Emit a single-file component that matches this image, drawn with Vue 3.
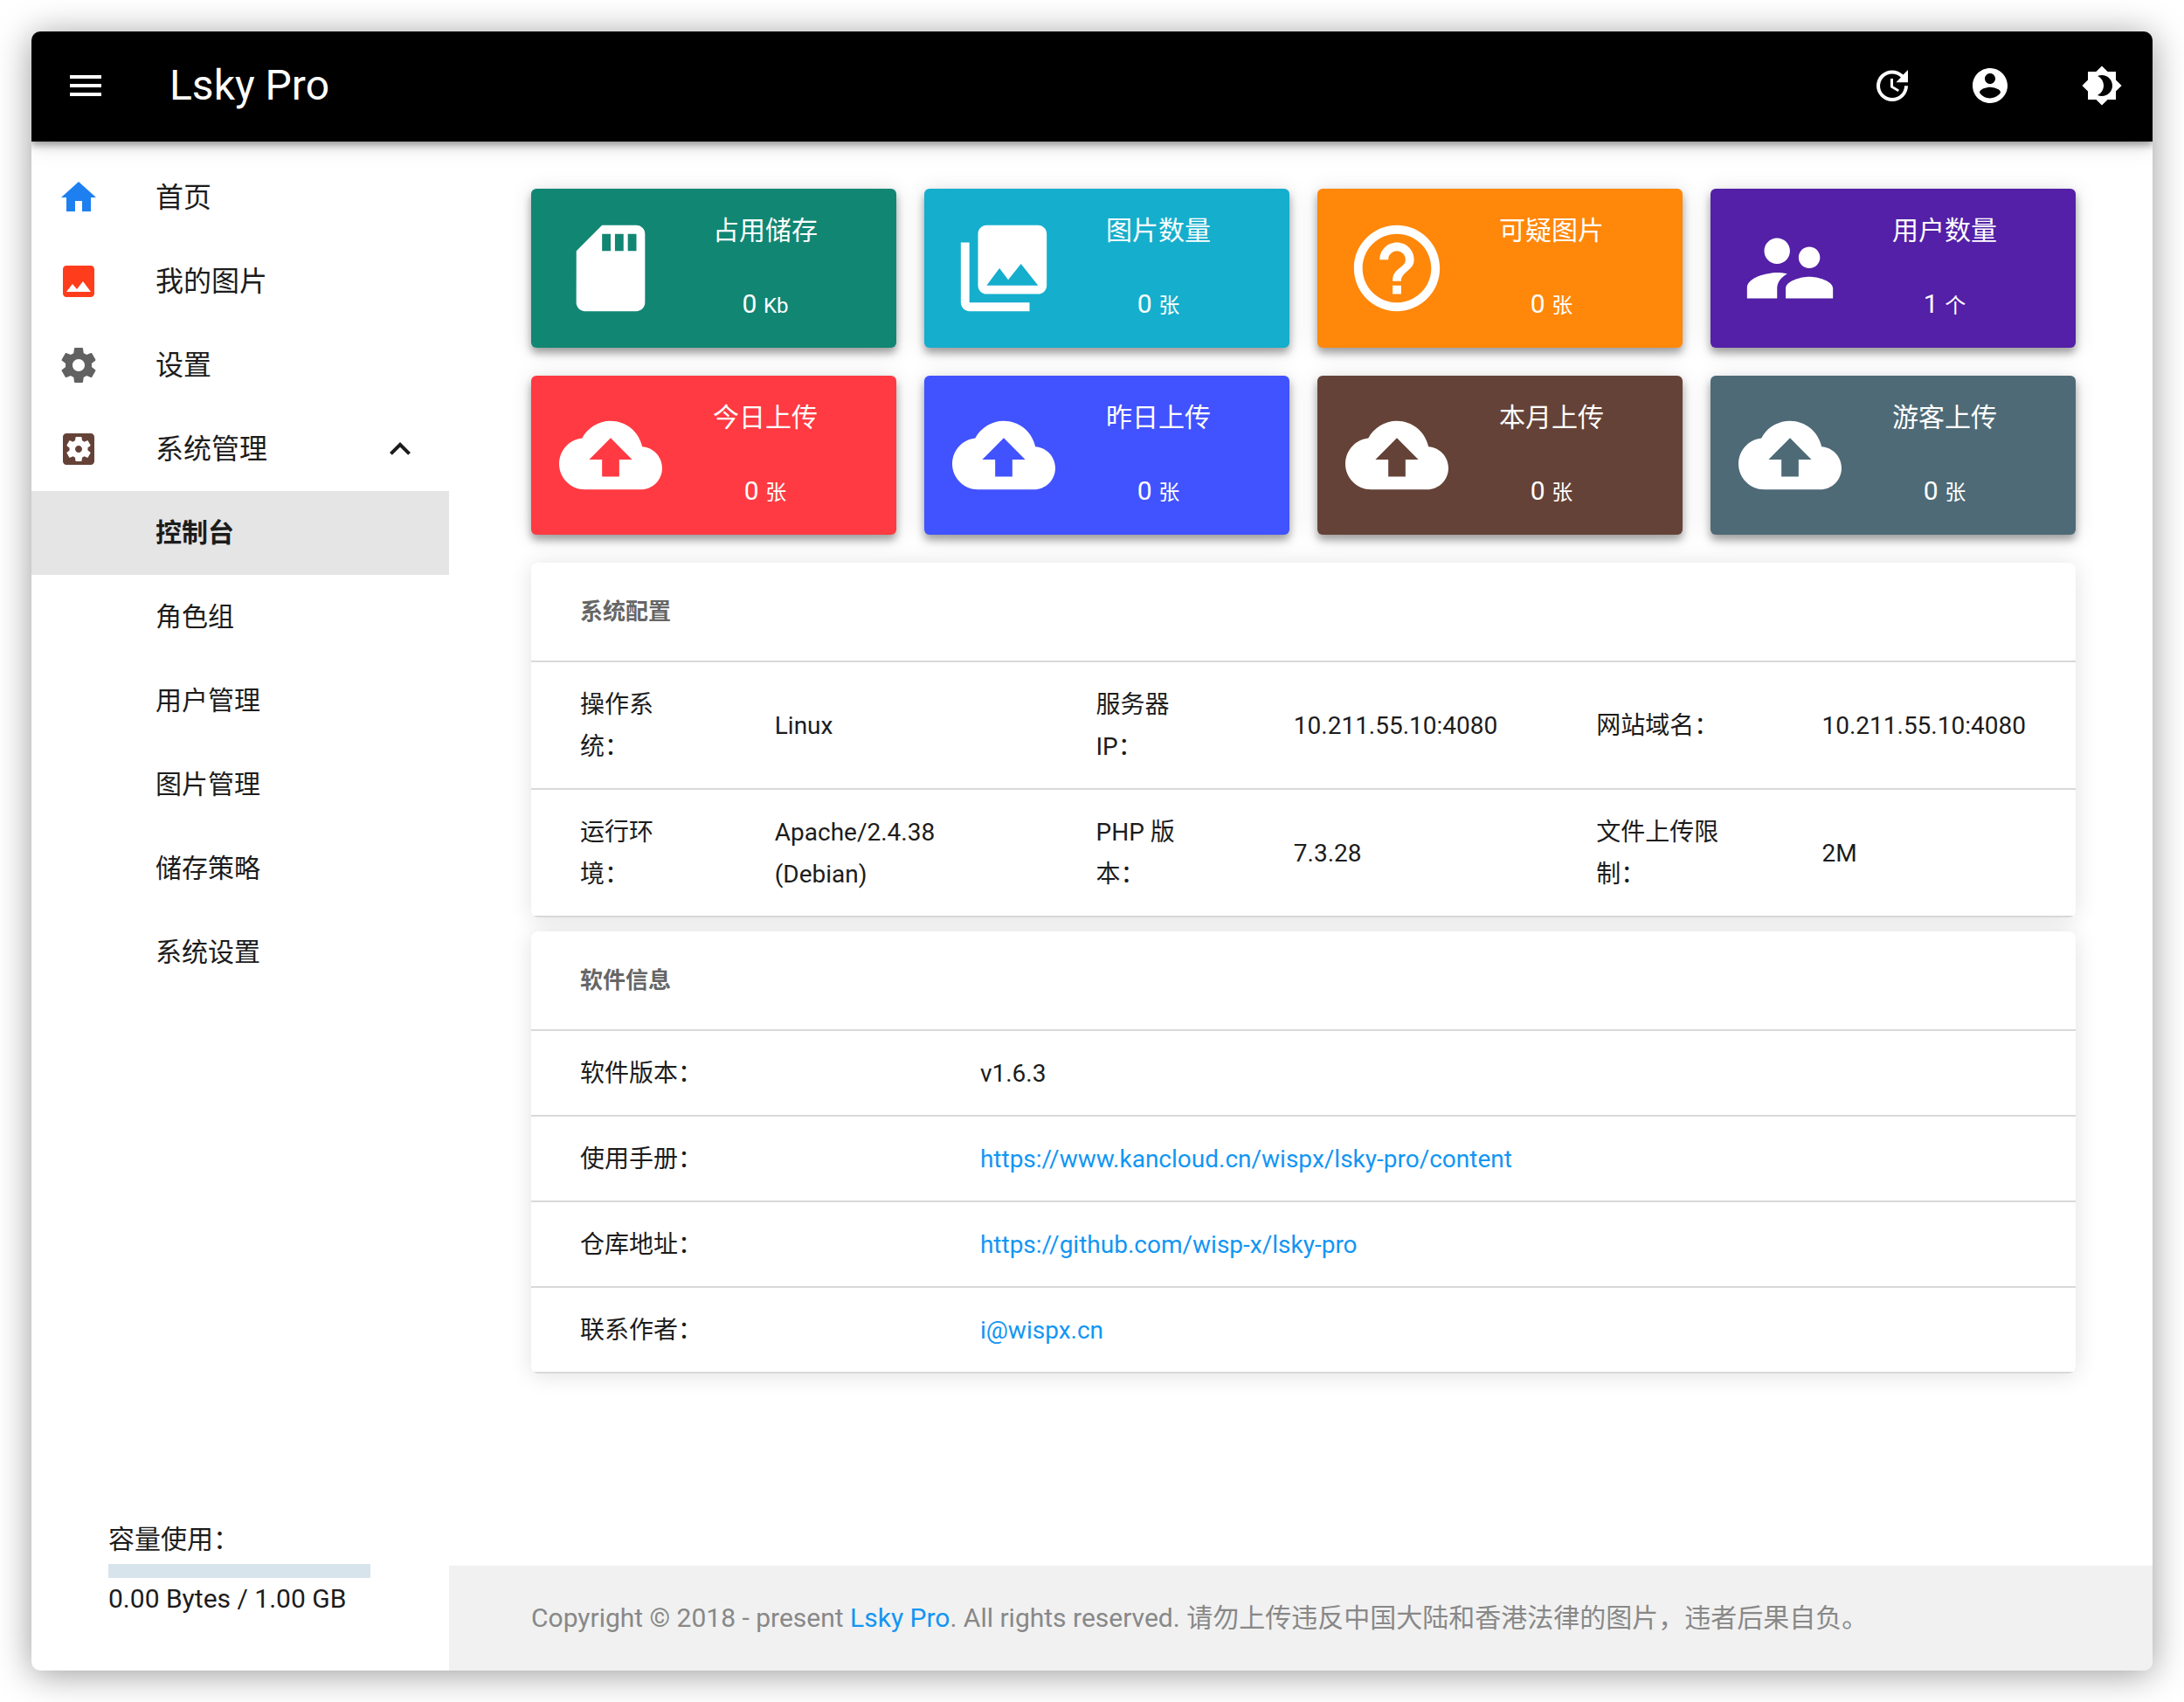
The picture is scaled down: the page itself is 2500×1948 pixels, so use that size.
<script setup>
import { ref } from 'vue'

const icons = {
  menu: 'M3 18h18v-2H3v2zm0-5h18v-2H3v2zm0-7v2h18V6H3z',
  update: 'M21 10.12h-6.78l2.74-2.82c-2.73-2.7-7.15-2.8-9.88-.1-2.73 2.71-2.73 7.08 0 9.79s7.15 2.71 9.88 0C18.32 15.65 19 14.08 19 12.1h2c0 1.98-.88 4.55-2.64 6.29-3.51 3.48-9.21 3.48-12.72 0-3.5-3.47-3.53-9.11-.02-12.58s9.14-3.47 12.65 0L21 3v7.12zM12.5 8v4.25l3.5 2.08-.72 1.21L11 13V8h1.5z',
  account: 'M12 2C6.48 2 2 6.48 2 12s4.48 10 10 10 10-4.48 10-10S17.52 2 12 2zm0 3c1.66 0 3 1.34 3 3s-1.34 3-3 3-3-1.34-3-3 1.34-3 3-3zm0 14.2c-2.5 0-4.71-1.28-6-3.22.03-1.99 4-3.08 6-3.08 1.99 0 5.97 1.09 6 3.08-1.29 1.94-3.5 3.22-6 3.22z',
  brightness: 'M20 8.69V4h-4.69L12 .69 8.69 4H4v4.69L.69 12 4 15.31V20h4.69L12 23.31 15.31 20H20v-4.69L23.31 12 20 8.69zM12 18c-.89 0-1.74-.2-2.5-.55C11.56 16.5 13 14.42 13 12s-1.44-4.5-3.5-5.45C10.26 6.2 11.11 6 12 6c3.31 0 6 2.69 6 6s-2.69 6-6 6z',
  home: 'M10 20v-6h4v6h5v-8h3L12 3 2 12h3v8z',
  image: 'M21 19V5c0-1.1-.9-2-2-2H5c-1.1 0-2 .9-2 2v14c0 1.1.9 2 2 2h14c1.1 0 2-.9 2-2zM8.5 13.5l2.5 3.01L14.5 12l4.5 6H5l3.5-4.5z',
  gear: 'M19.43 12.98c.04-.32.07-.64.07-.98s-.03-.66-.07-.98l2.11-1.65c.19-.15.24-.42.12-.64l-2-3.46c-.12-.22-.39-.3-.61-.22l-2.49 1c-.52-.4-1.08-.73-1.69-.98l-.38-2.65C14.46 2.18 14.25 2 14 2h-4c-.25 0-.46.18-.49.42l-.38 2.65c-.61.25-1.17.59-1.69.98l-2.49-1c-.23-.09-.49 0-.61.22l-2 3.46c-.13.22-.07.49.12.64l2.11 1.65c-.04.32-.07.65-.07.98s.03.66.07.98l-2.11 1.65c-.19.15-.24.42-.12.64l2 3.46c.12.22.39.3.61.22l2.49-1c.52.4 1.08.73 1.69.98l.38 2.65c.03.24.24.42.49.42h4c.25 0 .46-.18.49-.42l.38-2.65c.61-.25 1.17-.59 1.69-.98l2.49 1c.23.09.49 0 .61-.22l2-3.46c.12-.22.07-.49-.12-.64l-2.11-1.65zM12 15.5c-1.93 0-3.5-1.57-3.5-3.5s1.57-3.5 3.5-3.5 3.5 1.57 3.5 3.5-1.57 3.5-3.5 3.5z',
  gearBox: 'M12 10c-1.1 0-2 .9-2 2s.9 2 2 2 2-.9 2-2-.9-2-2-2zm7-7H5c-1.11 0-2 .9-2 2v14c0 1.1.89 2 2 2h14c1.11 0 2-.9 2-2V5c0-1.1-.89-2-2-2zm-1.75 9c0 .23-.02.46-.05.68l1.48 1.16c.13.11.17.3.08.45l-1.4 2.42c-.09.15-.27.21-.43.15l-1.74-.7c-.36.28-.76.51-1.18.69l-.26 1.85c-.03.17-.18.3-.35.3h-2.8c-.17 0-.32-.13-.35-.29l-.26-1.85c-.43-.18-.82-.41-1.18-.69l-1.74.7c-.16.06-.34 0-.43-.15l-1.4-2.42c-.09-.15-.05-.34.08-.45l1.48-1.16c-.03-.23-.05-.46-.05-.69 0-.23.02-.46.05-.68l-1.48-1.16c-.13-.11-.17-.3-.08-.45l1.4-2.42c.09-.15.27-.21.43-.15l1.74.7c.36-.28.76-.51 1.18-.69l.26-1.85c.03-.17.18-.3.35-.3h2.8c.17 0 .32.13.35.29l.26 1.85c.43.18.82.41 1.18.69l1.74-.7c.16-.06.34 0 .43.15l1.4 2.42c.09.15.05.34-.08.45l-1.48 1.16c.03.23.05.46.05.69z',
  chevron: 'M7.41 15.41L12 10.83l4.59 4.58L18 14l-6-6-6 6z',
  sdCard: 'M18 2h-8L4.02 8 4 20c0 1.1.9 2 2 2h12c1.1 0 2-.9 2-2V4c0-1.1-.9-2-2-2zm-6 6h-2V4h2v4zm3 0h-2V4h2v4zm3 0h-2V4h2v4z',
  photos: 'M22 16V4c0-1.1-.9-2-2-2H8c-1.1 0-2 .9-2 2v12c0 1.1.9 2 2 2h12c1.1 0 2-.9 2-2zm-11-4l2.03 2.71L16 11l4 5H8l3-4zM2 6v14c0 1.1.9 2 2 2h14v-2H4V6H2z',
  help: 'M11 18h2v-2h-2v2zm1-16C6.48 2 2 6.48 2 12s4.48 10 10 10 10-4.48 10-10S17.52 2 12 2zm0 18c-4.41 0-8-3.59-8-8s3.59-8 8-8 8 3.59 8 8-3.59 8-8 8zm0-14c-2.21 0-4 1.79-4 4h2c0-1.1.9-2 2-2s2 .9 2 2c0 2-3 1.75-3 5h2c0-2.25 3-2.5 3-5 0-2.21-1.79-4-4-4z',
  people: 'M16.5 12c1.38 0 2.49-1.12 2.49-2.5S17.88 7 16.5 7C15.12 7 14 8.12 14 9.5s1.12 2.5 2.5 2.5zM9 11c1.66 0 2.99-1.34 2.99-3S10.66 5 9 5C7.34 5 6 6.34 6 8s1.34 3 3 3zm7.5 3c-1.83 0-5.5.92-5.5 2.75V19h11v-2.25c0-1.83-3.67-2.75-5.5-2.75zM9 13c-2.33 0-7 1.17-7 3.5V19h7v-2.25c0-.85.33-2.34 2.37-3.47C10.5 13.1 9.66 13 9 13z',
  cloud: 'M19.35 10.04C18.67 6.59 15.64 4 12 4 9.11 4 6.6 5.64 5.35 8.04 2.34 8.36 0 10.91 0 14c0 3.31 2.69 6 6 6h13c2.76 0 5-2.24 5-5 0-2.64-2.05-4.78-4.65-4.96zM14 13v4h-4v-4H7l5-5 5 5h-3z'
}

const nav = [
  { label: '首页', icon: 'home', tone: 'blue' },
  { label: '我的图片', icon: 'image', tone: 'orange' },
  { label: '设置', icon: 'gear', tone: 'grey' }
]
const subNav = ['控制台', '角色组', '用户管理', '图片管理', '储存策略', '系统设置']
const active = ref('控制台')
const open = ref(true)

const stats = [
  { label: '占用储存', value: 0, unit: 'Kb', icon: 'sdCard', tone: 'teal' },
  { label: '图片数量', value: 0, unit: '张', icon: 'photos', tone: 'cyan' },
  { label: '可疑图片', value: 0, unit: '张', icon: 'help', tone: 'amber' },
  { label: '用户数量', value: 1, unit: '个', icon: 'people', tone: 'purple' },
  { label: '今日上传', value: 0, unit: '张', icon: 'cloud', tone: 'red' },
  { label: '昨日上传', value: 0, unit: '张', icon: 'cloud', tone: 'indigo' },
  { label: '本月上传', value: 0, unit: '张', icon: 'cloud', tone: 'brown' },
  { label: '游客上传', value: 0, unit: '张', icon: 'cloud', tone: 'slate' }
]

const system = [
  [['操作系统：', 'Linux'], ['服务器 IP：', '10.211.55.10:4080'], ['网站域名：', '10.211.55.10:4080']],
  [['运行环境：', 'Apache/2.4.38 (Debian)'], ['PHP 版本：', '7.3.28'], ['文件上传限制：', '2M']]
]

const software = [
  { label: '软件版本：', text: 'v1.6.3' },
  { label: '使用手册：', text: 'https://www.kancloud.cn/wispx/lsky-pro/content', href: 'https://www.kancloud.cn/wispx/lsky-pro/content' },
  { label: '仓库地址：', text: 'https://github.com/wisp-x/lsky-pro', href: 'https://github.com/wisp-x/lsky-pro' },
  { label: '联系作者：', text: 'i@wispx.cn', href: 'mailto:i@wispx.cn' }
]
</script>

<template>
  <div class="window">
    <header class="appbar">
      <button class="icon-btn" type="button" aria-label="菜单">
        <svg class="icon" viewBox="0 0 24 24"><path :d="icons.menu" /></svg>
      </button>
      <a class="brand" href="#">Lsky Pro</a>
      <div class="actions">
        <button class="icon-btn" type="button" aria-label="检查更新">
          <svg class="icon" viewBox="0 0 24 24"><path :d="icons.update" /></svg>
        </button>
        <button class="icon-btn" type="button" aria-label="账户">
          <svg class="icon" viewBox="0 0 24 24"><path :d="icons.account" /></svg>
        </button>
        <button class="icon-btn theme" type="button" aria-label="切换主题">
          <svg class="icon" viewBox="0 0 24 24"><path :d="icons.brightness" /></svg>
        </button>
      </div>
    </header>

    <div class="body">
      <aside class="sidebar">
        <nav>
          <a v-for="n in nav" :key="n.label" class="item" href="#">
            <svg class="icon" :class="n.tone" viewBox="0 0 24 24"><path :d="icons[n.icon]" /></svg>
            <span>{{ n.label }}</span>
          </a>
          <button class="item" type="button" :aria-expanded="open" @click="open = !open">
            <svg class="icon umber" viewBox="0 0 24 24"><path :d="icons.gearBox" /></svg>
            <span>系统管理</span>
            <svg class="icon arrow" viewBox="0 0 24 24"><path :d="icons.chevron" /></svg>
          </button>
          <template v-if="open">
            <a
              v-for="s in subNav"
              :key="s"
              class="item sub"
              :class="{ active: s === active }"
              href="#"
              @click.prevent="active = s"
            >{{ s }}</a>
          </template>
        </nav>
        <div class="quota">
          <label for="quota">容量使用：</label>
          <progress id="quota" value="0" max="1"></progress>
          <span>0.00 Bytes / 1.00 GB</span>
        </div>
      </aside>

      <div class="main">
        <main class="content">
          <section class="stats">
            <article v-for="s in stats" :key="s.label" class="stat" :class="s.tone">
              <svg class="stat-icon" viewBox="0 0 24 24"><path :d="icons[s.icon]" /></svg>
              <div class="stat-text">
                <span>{{ s.label }}</span>
                <span>{{ s.value }} <small>{{ s.unit }}</small></span>
              </div>
            </article>
          </section>

          <div class="panels">
            <table class="panel">
              <colgroup>
                <col class="c1" /><col class="c2" /><col class="c3" /><col class="c4" /><col class="c5" /><col />
              </colgroup>
              <thead>
                <tr><th colspan="6">系统配置</th></tr>
              </thead>
              <tbody>
                <tr v-for="(row, i) in system" :key="i">
                  <template v-for="[k, v] in row" :key="k">
                    <td>{{ k }}</td>
                    <td>{{ v }}</td>
                  </template>
                </tr>
              </tbody>
            </table>

            <table class="panel">
              <colgroup><col class="key" /><col /></colgroup>
              <thead>
                <tr><th colspan="2">软件信息</th></tr>
              </thead>
              <tbody>
                <tr v-for="s in software" :key="s.label">
                  <td>{{ s.label }}</td>
                  <td><a v-if="s.href" :href="s.href">{{ s.text }}</a><template v-else>{{ s.text }}</template></td>
                </tr>
              </tbody>
            </table>
          </div>
        </main>
        <footer class="footer">
          <p>Copyright © 2018 - present <a href="#">Lsky Pro</a>. All rights reserved. 请勿上传违反中国大陆和香港法律的图片，违者后果自负。</p>
        </footer>
      </div>
    </div>
  </div>
</template>

<style>
body {
  margin: 0;
  background: #fff;
}
</style>

<style scoped>
.window {
  box-sizing: border-box;
  display: flex;
  flex-direction: column;
  min-height: calc(100vh - 72px);
  margin: 36px;
  overflow: hidden;
  border-radius: 10px;
  background: #fff;
  box-shadow: 0 4px 40px rgba(0, 0, 0, 0.4);
  color: #1c1c1c;
  font-family: Roboto, "Noto Sans CJK SC", sans-serif;
  font-size: 30px;
  line-height: 40px;
}

a {
  color: #1296f3;
  text-decoration: none;
}

button {
  border: 0;
  background: none;
  color: inherit;
  font: inherit;
  cursor: pointer;
}

.icon {
  display: block;
  flex: none;
  width: 48px;
  height: 48px;
  fill: currentColor;
}

.appbar {
  position: relative;
  z-index: 1;
  display: flex;
  align-items: center;
  height: 126px;
  padding: 0 34px 2px 38px;
  box-sizing: border-box;
  background: #000;
  color: #fff;
  box-shadow: 0 4px 8px rgba(0, 0, 0, 0.35), 0 4px 24px rgba(0, 0, 0, 0.14);
}

.icon-btn {
  padding: 0;
}

.brand {
  margin-left: 72px;
  color: #fff;
  font-size: 48px;
  line-height: 56px;
}

.actions {
  display: flex;
  gap: 64px;
  margin-left: auto;
}

.theme {
  margin-left: 16px;
}

.body {
  display: flex;
  flex: 1;
}

.sidebar {
  display: flex;
  flex: none;
  flex-direction: column;
  justify-content: space-between;
  width: 478px;
  padding-top: 16px;
  box-sizing: border-box;
}

.item {
  display: flex;
  align-items: center;
  gap: 64px;
  width: 100%;
  height: 96px;
  padding: 0 32px 0 30px;
  box-sizing: border-box;
  color: #1c1c1c;
  font-size: 32px;
  text-align: left;
}

.sub {
  padding-left: 142px;
  font-size: 30px;
}

.active {
  background: #e5e5e5;
  font-weight: 700;
}

.arrow {
  margin-left: auto;
}

.blue { color: #1e80f0; }
.orange { color: #ff3d1c; }
.grey { color: #616161; }
.umber { color: #654237; }

.quota {
  display: flex;
  flex-direction: column;
  width: 300px;
  margin-left: 88px;
  padding-bottom: 62px;
}

.quota label {
  margin-bottom: 8px;
}

.quota span {
  margin-top: 4px;
}

progress {
  display: block;
  width: 100%;
  height: 16px;
  border: 0;
  appearance: none;
  background: #d8e4ec;
}

progress::-webkit-progress-bar {
  background: #d8e4ec;
}

progress::-webkit-progress-value {
  background: #1296f3;
}

.main {
  display: flex;
  flex: 1;
  flex-direction: column;
  min-width: 0;
}

.content {
  flex: 1;
  padding: 54px 88px 54px 94px;
}

.stats {
  display: grid;
  grid-template-columns: repeat(4, 1fr);
  gap: 32px;
}

.stat {
  display: flex;
  align-items: center;
  height: 182px;
  padding: 0 32px;
  box-sizing: border-box;
  border-radius: 6px;
  color: #fff;
  box-shadow: 0 6px 10px rgba(0, 0, 0, 0.34), 0 2px 24px rgba(0, 0, 0, 0.12);
}

.teal { background: #118673; }
.cyan { background: #15aecd; }
.amber { background: #ff870a; }
.purple { background: #5320a7; }
.red { background: #ff3a42; }
.indigo { background: #4152ff; }
.brown { background: #654237; }
.slate { background: #4e6a77; }

.stat-icon {
  flex: none;
  width: 118px;
  height: 118px;
  fill: #fff;
}

.stat-text {
  display: flex;
  flex: 1;
  flex-direction: column;
  gap: 44px;
  text-align: center;
}

.stat small {
  font-size: 24px;
}

.panels {
  display: grid;
  gap: 16px;
  margin-top: 32px;
}

.panel {
  width: 100%;
  overflow: hidden;
  border-radius: 8px;
  border-spacing: 0;
  table-layout: fixed;
  background: #fff;
  box-shadow: 0 2px 26px rgba(0, 0, 0, 0.12);
  font-size: 28px;
  line-height: 48px;
}

.c1 { width: 12.6%; }
.c2 { width: 20.8%; }
.c3 { width: 12.8%; }
.c4 { width: 19.6%; }
.c5 { width: 14.6%; }
.key { width: 25.9%; }

th,
td {
  padding: 25px 56px 23px;
  border-bottom: 2px solid #d9d9d9;
  text-align: left;
}

th {
  padding: 32px 56px;
  color: #666;
  font-size: 26px;
}

.footer {
  padding: 40px 94px;
  background: #f1f1f1;
  color: #888;
}

.footer p {
  margin: 0;
}
</style>
